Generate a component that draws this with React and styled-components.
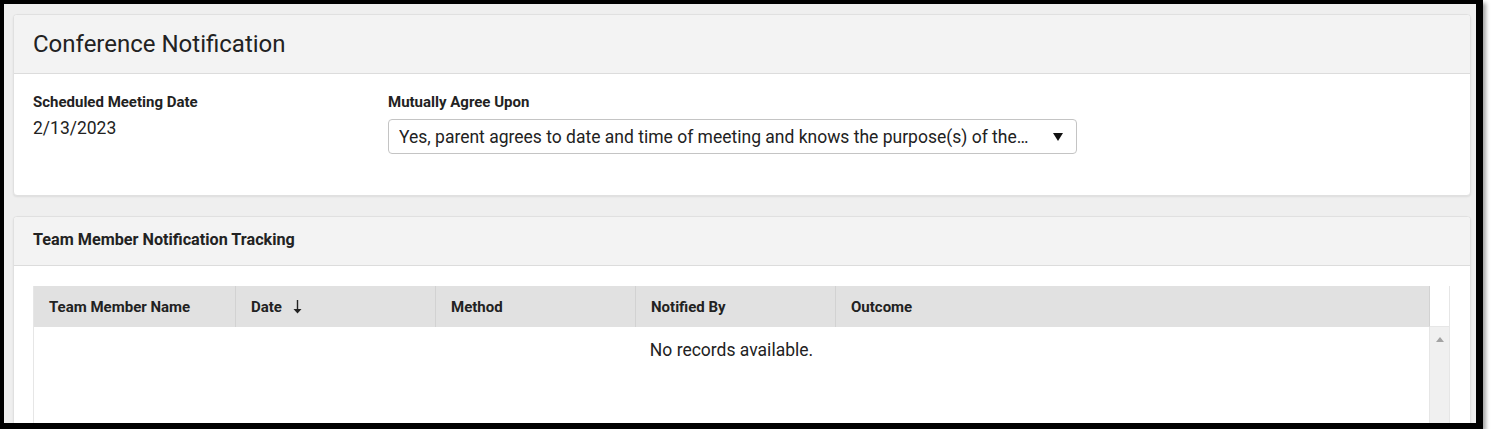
import React from "react";
import styled, { createGlobalStyle } from "styled-components";

const Global = createGlobalStyle`
  html, body { margin: 0; padding: 0; background: #ffffff; }
  body { font-family: Roboto, "Noto Sans", Arial, sans-serif; color: #222; }
  * { box-sizing: border-box; }
`;

const Frame = styled.div`
  width: 1483px;
  height: 429px;
  border-style: solid;
  border-color: #000;
  border-width: 4px 7px 6px 4px;
  box-shadow: 3px 3px 4px rgba(0, 0, 0, 0.35);
  background: #efefef;
  overflow: hidden;
`;

const Page = styled.div`
  padding: 10px 5px 0 9px;
  display: flex;
  flex-direction: column;
  gap: 20px;
`;

const Card = styled.section`
  background: #fff;
  border: 1px solid #e0e0e0;
  border-radius: 4px;
  box-shadow: 0 1px 2px rgba(0, 0, 0, 0.08);
  overflow: hidden;
`;

const CardHeader = styled.header`
  background: #f3f3f3;
  border-bottom: 1px solid #dcdcdc;
  height: ${(p) => p.$h}px;
  padding: 0 19px ${(p) => p.$pb || 0}px;
  display: flex;
  align-items: center;
`;

const PageTitle = styled.h1`
  margin: 0;
  font-size: 24px;
  font-weight: 400;
  color: #222;
  line-height: 1;
`;

const SectionTitle = styled.h2`
  margin: 0;
  font-size: 16.2px;
  font-weight: 700;
  color: #222;
  line-height: 1;
`;

const FieldsBody = styled.div`
  display: flex;
  padding: 20px 19px 0;
  height: 121px;
`;

const Field = styled.div`
  width: ${(p) => p.$w}px;
  display: flex;
  flex-direction: column;
`;

const Label = styled.div`
  font-size: 15px;
  font-weight: 700;
  color: #222;
  line-height: 17px;
`;

const Value = styled.div`
  font-size: 17.5px;
  color: #222;
  margin-top: 7px;
  line-height: 20px;
`;

const Select = styled.div`
  margin-top: 8px;
  height: 35px;
  border: 1px solid #c4c4c4;
  border-radius: 4px;
  background: #fff;
  display: flex;
  align-items: center;
  padding: 0 13px 0 10px;
  font-size: 17.5px;
  color: #222;
`;

const SelectText = styled.span`
  flex: 1;
  white-space: nowrap;
  overflow: hidden;
  text-overflow: ellipsis;
`;

const Caret = styled.span`
  width: 0;
  height: 0;
  border-left: 5px solid transparent;
  border-right: 5px solid transparent;
  border-top: 8px solid #111;
  margin-left: 22px;
`;

const TableBody = styled.div`
  padding: 20px 20px 0 19px;
`;

const Table = styled.div`
  border-left: 1px solid #e6e6e6;
  border-right: 1px solid #e6e6e6;
`;

const Row = styled.div`
  display: grid;
  grid-template-columns: 201px 200px 200px 200px 1fr 20px;
`;

const HeadCell = styled.div`
  height: 41px;
  background: ${(p) => (p.$blank ? "#fff" : "#e1e1e1")};
  border-left: ${(p) => (p.$first ? "none" : "1px solid #d2d2d2")};
  border-bottom: ${(p) => (p.$blank ? "1px solid #e6e6e6" : "none")};
  padding-left: 15px;
  display: flex;
  align-items: center;
  gap: 11px;
  font-size: 15px;
  font-weight: 700;
  color: #222;
`;

const EmptyCell = styled.div`
  grid-column: 1 / 6;
  height: 100px;
  text-align: center;
  font-size: 17.5px;
  color: #222;
  padding-top: 13px;
`;

const ScrollTrack = styled.div`
  background: #f0f0f0;
  border-left: 1px solid #e6e6e6;
  display: flex;
  justify-content: center;
  padding-top: 10px;
`;

const UpArrow = styled.span`
  width: 0;
  height: 0;
  border-left: 4px solid transparent;
  border-right: 4px solid transparent;
  border-bottom: 5px solid #a3a3a3;
`;

const SortArrow = () => (
  <svg width="9" height="14" viewBox="0 0 9 14" aria-hidden="true">
    <rect x="3.8" y="0" width="1.4" height="10" fill="#222" />
    <path d="M0.5 9 L8.5 9 L4.5 13.5 Z" fill="#222" />
  </svg>
);

const columns = [
  { label: "Team Member Name" },
  { label: "Date", sort: true },
  { label: "Method" },
  { label: "Notified By" },
  { label: "Outcome" },
];

export default function App() {
  return (
    <>
      <Global />
      <Frame>
        <Page>
          <Card>
            <CardHeader $h={59} $pb={1}>
              <PageTitle>Conference Notification</PageTitle>
            </CardHeader>
            <FieldsBody>
              <Field $w={355}>
                <Label>Scheduled Meeting Date</Label>
                <Value>2/13/2023</Value>
              </Field>
              <Field $w={689}>
                <Label>Mutually Agree Upon</Label>
                <Select>
                  <SelectText>
                    Yes, parent agrees to date and time of meeting and knows the purpose(s) of the meeting
                  </SelectText>
                  <Caret />
                </Select>
              </Field>
            </FieldsBody>
          </Card>
          <Card>
            <CardHeader $h={49} $pb={1}>
              <SectionTitle>Team Member Notification Tracking</SectionTitle>
            </CardHeader>
            <TableBody>
              <Table>
                <Row>
                  {columns.map((c, i) => (
                    <HeadCell key={c.label} $first={i === 0}>
                      {c.label}
                      {c.sort && <SortArrow />}
                    </HeadCell>
                  ))}
                  <HeadCell $blank />
                </Row>
                <Row>
                  <EmptyCell>No records available.</EmptyCell>
                  <ScrollTrack>
                    <UpArrow />
                  </ScrollTrack>
                </Row>
              </Table>
            </TableBody>
          </Card>
        </Page>
      </Frame>
    </>
  );
}
